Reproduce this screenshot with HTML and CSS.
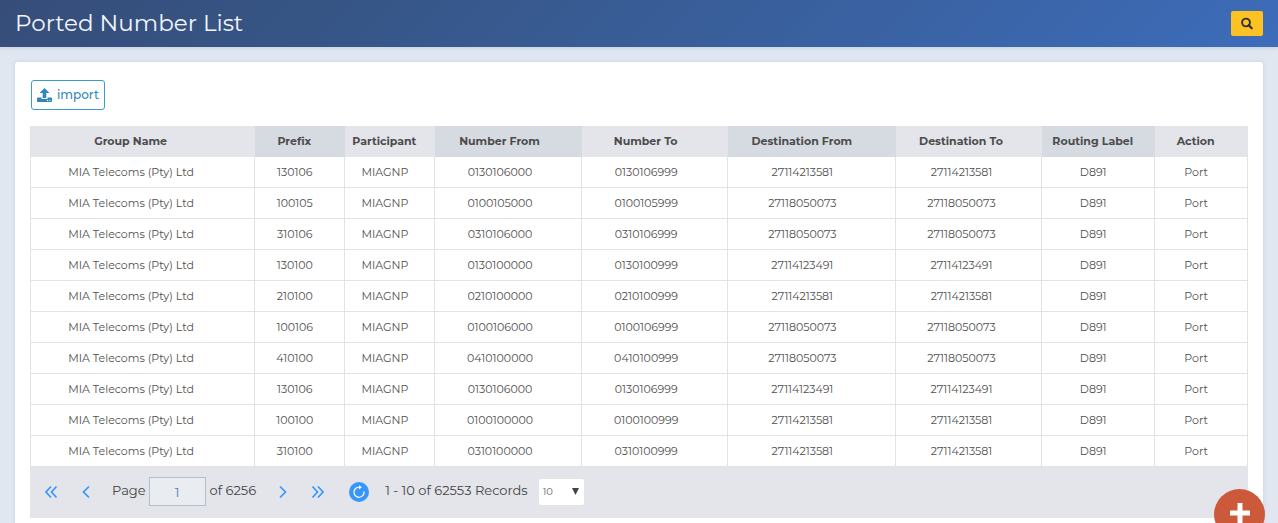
FILE: index.html
```html
<!DOCTYPE html>
<html lang="en">
<head>
<meta charset="utf-8">
<title>Ported Number List</title>
<link rel="stylesheet" href="styles.css">
</head>
<body>
<header class="topbar">
  <h1 class="title">Ported Number List</h1>
  <button class="search" type="button" aria-label="Search">
    <svg width="12" height="12" viewBox="0 0 12 12" fill="none" stroke="currentColor"><circle cx="5" cy="4.500" r="3.900" stroke-width="1.900"/><path d="M7.800 7.300l2.900 2.900" stroke-width="2.300" stroke-linecap="round"/></svg>
  </button>
</header>
<main class="card">
  <button class="import" type="button">
    <svg width="15" height="14" viewBox="0 0 15 14" fill="currentColor"><path d="M7.500 0l4.500 4.500v.5H9.300v5H5.700V5H3v-.5z"/><path fill-rule="evenodd" d="M.8 9.500h3.700v1.500h6V9.500h3.700q.8 0 .8.8v2.900q0 .8-.8.8H.8q-.8 0-.8-.8V10.300Q0 9.500 .8 9.500zM10 12v1h1v-1zM12.300 12v1h1v-1z"/></svg>
    <span>import</span>
  </button>
  <table class="grid">
    <colgroup><col class="c-group"><col class="c-short"><col class="c-short"><col class="c-number"><col class="c-number"><col class="c-dest"><col class="c-number"><col class="c-label"><col class="c-action"></colgroup>
    <thead>
      <tr><th scope="col">Group Name</th><th scope="col">Prefix</th><th scope="col">Participant</th><th scope="col">Number From</th><th scope="col">Number To</th><th scope="col">Destination From</th><th scope="col">Destination To</th><th scope="col">Routing Label</th><th scope="col">Action</th></tr>
    </thead>
    <tbody>
      <tr><td>MIA Telecoms (Pty) Ltd</td><td>130106</td><td>MIAGNP</td><td>0130106000</td><td>0130106999</td><td>27114213581</td><td>27114213581</td><td>D891</td><td>Port</td></tr>
      <tr><td>MIA Telecoms (Pty) Ltd</td><td>100105</td><td>MIAGNP</td><td>0100105000</td><td>0100105999</td><td>27118050073</td><td>27118050073</td><td>D891</td><td>Port</td></tr>
      <tr><td>MIA Telecoms (Pty) Ltd</td><td>310106</td><td>MIAGNP</td><td>0310106000</td><td>0310106999</td><td>27118050073</td><td>27118050073</td><td>D891</td><td>Port</td></tr>
      <tr><td>MIA Telecoms (Pty) Ltd</td><td>130100</td><td>MIAGNP</td><td>0130100000</td><td>0130100999</td><td>27114123491</td><td>27114123491</td><td>D891</td><td>Port</td></tr>
      <tr><td>MIA Telecoms (Pty) Ltd</td><td>210100</td><td>MIAGNP</td><td>0210100000</td><td>0210100999</td><td>27114213581</td><td>27114213581</td><td>D891</td><td>Port</td></tr>
      <tr><td>MIA Telecoms (Pty) Ltd</td><td>100106</td><td>MIAGNP</td><td>0100106000</td><td>0100106999</td><td>27118050073</td><td>27118050073</td><td>D891</td><td>Port</td></tr>
      <tr><td>MIA Telecoms (Pty) Ltd</td><td>410100</td><td>MIAGNP</td><td>0410100000</td><td>0410100999</td><td>27118050073</td><td>27118050073</td><td>D891</td><td>Port</td></tr>
      <tr><td>MIA Telecoms (Pty) Ltd</td><td>130106</td><td>MIAGNP</td><td>0130106000</td><td>0130106999</td><td>27114123491</td><td>27114123491</td><td>D891</td><td>Port</td></tr>
      <tr><td>MIA Telecoms (Pty) Ltd</td><td>100100</td><td>MIAGNP</td><td>0100100000</td><td>0100100999</td><td>27114213581</td><td>27114213581</td><td>D891</td><td>Port</td></tr>
      <tr><td>MIA Telecoms (Pty) Ltd</td><td>310100</td><td>MIAGNP</td><td>0310100000</td><td>0310100999</td><td>27114213581</td><td>27114213581</td><td>D891</td><td>Port</td></tr>
    </tbody>
  </table>
  <nav class="pager" aria-label="Pages">
    <div class="steps">
      <button class="step" type="button" aria-label="First page"><svg width="12" height="12" viewBox="0 0 12 12"><path d="M6 .5L1 6l5 5.500M11.500 .5l-5 5.500 5 5.500"/></svg></button>
      <button class="step" type="button" aria-label="Previous page"><svg width="12" height="12" viewBox="0 0 12 12"><path d="M9 .5L3.500 6 9 11.500"/></svg></button>
    </div>
    <label class="page-label" for="page">Page</label>
    <input class="page" id="page" type="text" value="1">
    <span class="total">of 6256</span>
    <div class="steps">
      <button class="step" type="button" aria-label="Next page"><svg width="12" height="12" viewBox="0 0 12 12"><path d="M3 .5L8.500 6 3 11.500"/></svg></button>
      <button class="step" type="button" aria-label="Last page"><svg width="12" height="12" viewBox="0 0 12 12"><path d="M.5 .5l5 5.500-5 5.500M6 .5L11 6l-5 5.500"/></svg></button>
    </div>
    <button class="refresh" type="button" aria-label="Refresh"><svg width="12" height="12" viewBox="0 0 12 12"><path d="M6.500 1.300A5 5 0 1 0 10.900 5.300" fill="none" stroke="#fff" stroke-width="1.200"/><path d="M6 -.8L8.800 1.300 6 3.400z" fill="#fff"/></svg></button>
    <span class="records">1 - 10 of 62553 Records</span>
    <div class="size-box">
      <select class="size" aria-label="Records per page"><option>10</option><option>20</option><option>50</option></select>
      <svg class="arrow" width="7" height="7" viewBox="0 0 7 7"><path d="M0 0h7L3.500 7z" fill="#444"/></svg>
    </div>
  </nav>
</main>
<button class="add" type="button" aria-label="Add"><svg width="20" height="20" viewBox="0 0 20 20"><path d="M10 2.500v15M2.500 10h15" stroke="#fff" stroke-width="5" stroke-linecap="square" stroke-linejoin="round"/></svg></button>
</body>
</html>
```
FILE: styles.css
```css
* { box-sizing: border-box; }
body {
  margin: 0;
  height: 100vh;
  overflow: hidden;
  background: #e0e7f1;
  color: #505050;
  font-family: Montserrat, Inter, sans-serif;
  font-size: 13px;
}
button, input, select { font: inherit; }
button { padding: 0; border: 0; background: none; cursor: pointer; }
svg { display: block; overflow: visible; }
.topbar {
  display: flex;
  align-items: center;
  justify-content: space-between;
  height: 47px;
  padding: 0 15px;
  background: linear-gradient(135deg, #364d79, #365585 25%, #3d6cb9);
  box-shadow: 0 1px 4px rgba(40, 60, 110, .15);
}
.title {
  margin: 0;
  padding-bottom: 2px;
  color: #f4f6fa;
  font-size: 23px;
  font-weight: 400;
  line-height: 30px;
}
.search {
  display: grid;
  place-items: center;
  width: 32px;
  height: 25px;
  border-radius: 2px;
  background: #fcc224;
  color: #2e2e2e;
}
.card {
  margin: 15px 15px 0;
  padding: 18px 15px 20px;
  border-radius: 3px;
  background: #fff;
  box-shadow: 0 0 4px rgba(60, 80, 120, .15);
}
.import {
  display: flex;
  align-items: center;
  gap: 5px;
  height: 30px;
  margin-left: 1px;
  padding: 0 5px;
  border: 1px solid #3a9bd1;
  border-radius: 3px;
  color: #3287b9;
  font-size: 12px;
  font-weight: 500;
}
.import span { padding-bottom: 2px; }
.grid {
  width: 100%;
  margin-top: 16px;
  border-collapse: separate;
  border-spacing: 0;
  table-layout: fixed;
  border-left: 1px solid #e2e3e5;
  font-size: 11px;
  line-height: 14px;
}
.c-group { width: 18.4%; }
.c-short { width: 7.4%; }
.c-number { width: 12%; }
.c-dest { width: 13.8%; }
.c-label { width: 9.3%; }
.c-action { width: 7.6%; }
.grid th, .grid td {
  height: 31px;
  padding: 0 16px 0 0;
  text-align: center;
  white-space: nowrap;
}
.grid td { border-right: 1px solid #e2e3e5; border-bottom: 1px solid #e2e3e5; }
.grid th:first-child, .grid td:first-child { padding-right: 23px; }
.grid th:nth-child(2), .grid td:nth-child(2),
.grid th:nth-child(3), .grid td:nth-child(3),
.grid th:nth-child(8), .grid td:nth-child(8),
.grid th:nth-child(9), .grid td:nth-child(9) { padding-right: 10px; }
.grid th:nth-child(6), .grid td:nth-child(6) { padding-right: 18px; }
.grid th:nth-child(7), .grid td:nth-child(7) { padding-right: 14px; }
.grid thead th {
  padding-bottom: 2px;
  border-right: 2px solid transparent;
  background: #e3e5ea;
  color: #4c4c4c;
  font-weight: 700;
}
.grid thead th:nth-child(even) { background: #d6dbe2; }
.pager {
  display: flex;
  align-items: center;
  height: 51px;
  padding: 0 15px 2px;
  background: #e3e5ea;
  color: #444;
}
.steps { display: flex; gap: 23px; }
.step path { fill: none; stroke: #3896fb; stroke-width: 1.7; }
.page-label, .total, .records { padding-bottom: 4px; }
.page-label { margin-left: 20px; }
.page {
  width: 57px;
  height: 29px;
  margin: 0 4px 0 3px;
  border: 1px solid #b2bfcc;
  background: #e9edf2;
  color: #4a7fae;
  text-align: center;
}
.total { margin-right: 21px; }
.refresh {
  display: grid;
  place-items: center;
  width: 20px;
  height: 20px;
  margin: 0 16px 0 25px;
  border-radius: 50%;
  background: #3896fb;
}
.size-box { display: grid; align-items: center; margin-left: 11px; }
.size, .arrow { grid-area: 1 / 1; }
.size {
  appearance: none;
  width: 45px;
  height: 26px;
  padding: 0 4px;
  border: 0;
  border-radius: 2px;
  background: #fff;
  color: #666;
  font-size: 10px;
}
.arrow { justify-self: end; margin-right: 5px; pointer-events: none; }
.add {
  position: fixed;
  right: 13px;
  bottom: -17px;
  display: grid;
  place-items: center;
  width: 51px;
  height: 51px;
  padding-bottom: 4px;
  border-radius: 50%;
  background: #cb593a;
}
```
